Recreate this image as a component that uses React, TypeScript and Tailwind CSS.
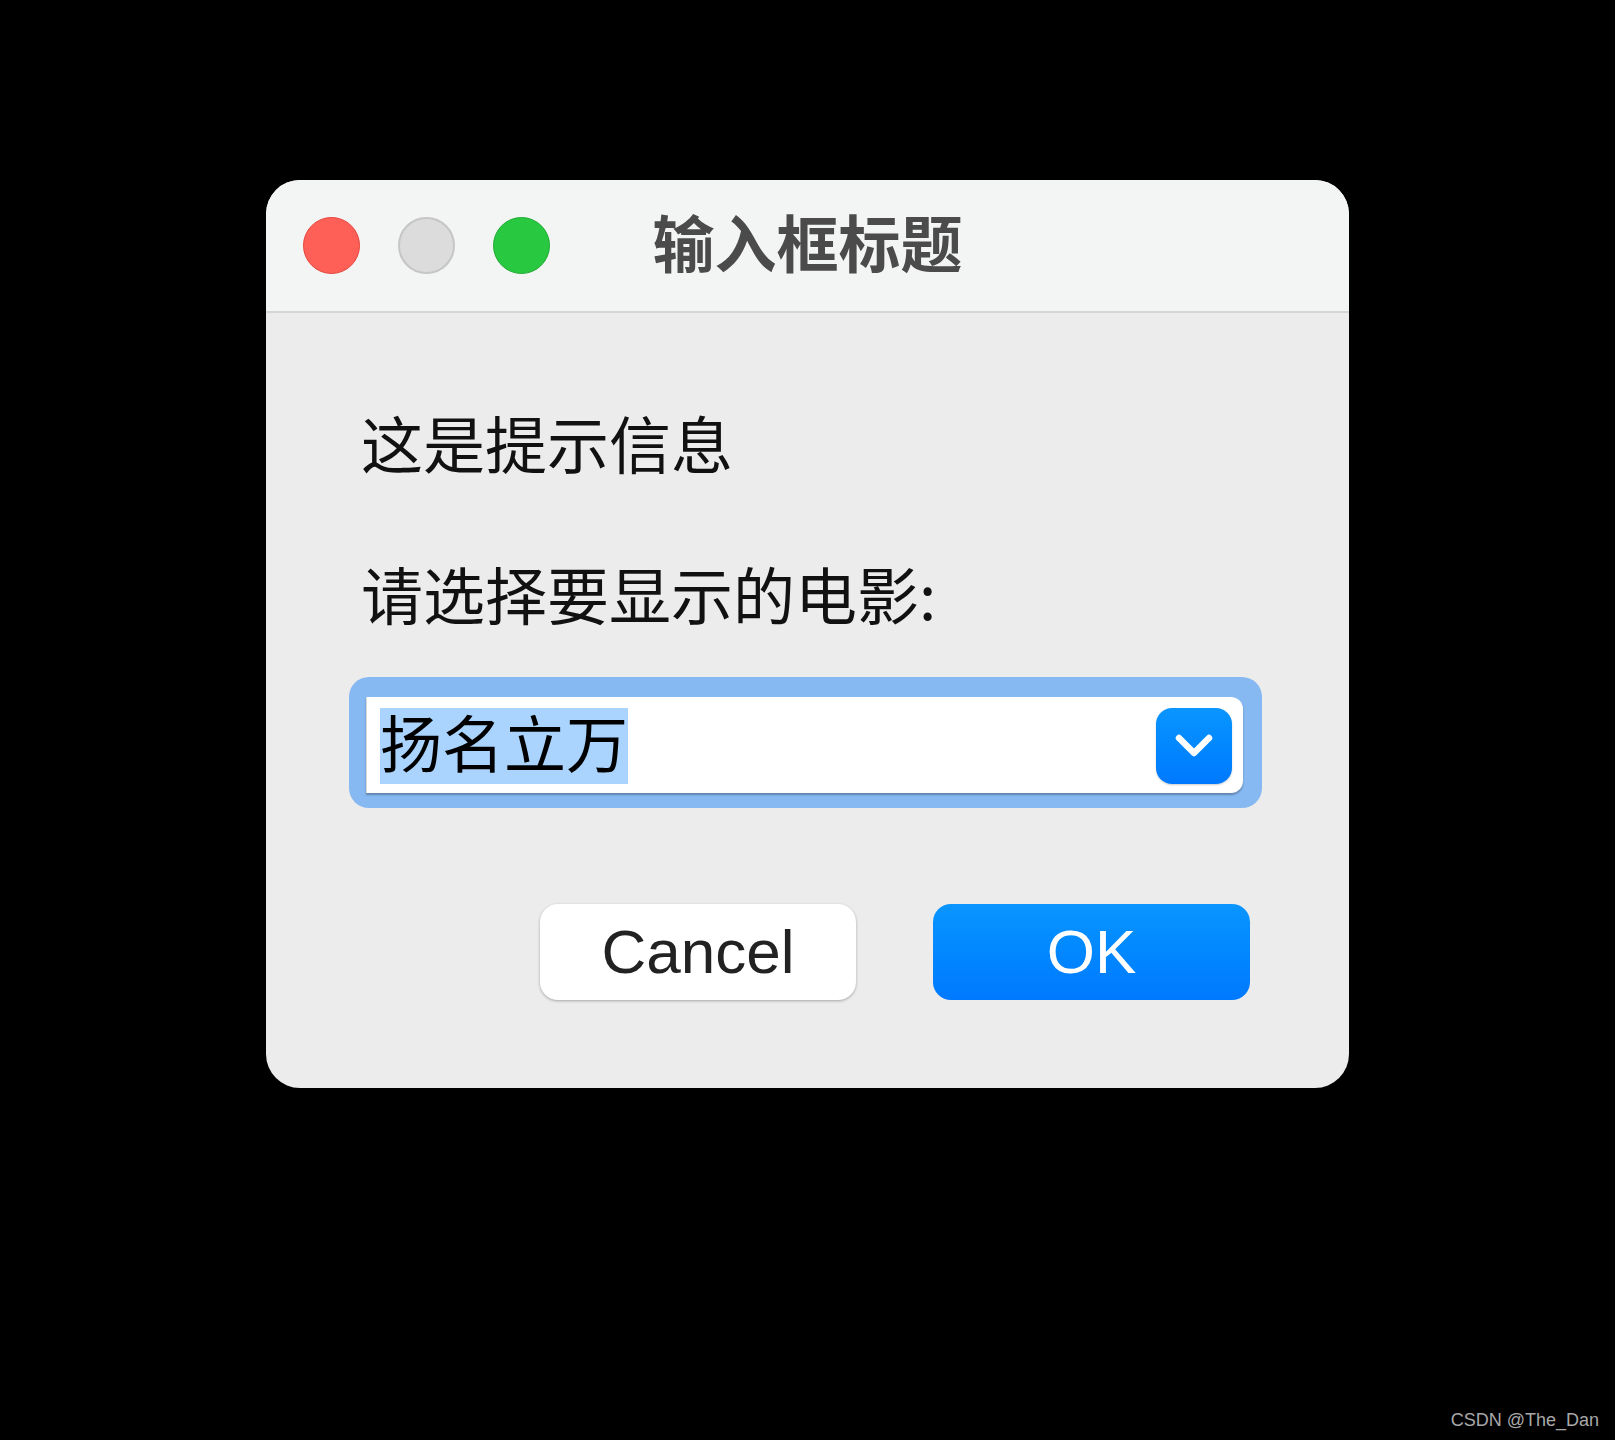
import React from "react";

const cjk = "font-['Noto_Sans_CJK_SC','Noto_Sans',sans-serif]";

export default function App() {
  return (
    <div className="relative h-[1440px] w-full bg-black pl-[266px] pt-[180px]">
      <div className="flex h-[908px] w-[1083px] flex-col overflow-hidden rounded-[34px] bg-[#ececec]">
        {/* title bar */}
        <div className="grid h-[133px] shrink-0 grid-cols-[1fr_auto_1fr] items-center border-b-2 border-[#d5d5d5] bg-[#f3f4f4] pl-[37px]">
          <div className="flex items-center gap-[38px]">
            <div className="h-[57px] w-[57px] rounded-full border border-[#e5443c] bg-[#fe5f57]" />
            <div className="h-[57px] w-[57px] rounded-full border-2 border-[#c6c6c6] bg-[#dcdcdc]" />
            <div className="h-[57px] w-[57px] rounded-full border border-[#1faa32] bg-[#28c840]" />
          </div>
          <div className={`${cjk} pb-[10px] pr-[37px] text-[62px] font-bold leading-[62px] text-[#4b4b4b]`}>输入框标题</div>
          <div />
        </div>

        {/* body */}
        <div className="flex flex-1 flex-col pl-[95px] pt-[98px]">
          <div className={`${cjk} text-[62px] leading-[62px] text-[#111]`}>这是提示信息</div>
          <div className={`${cjk} mt-[89px] text-[62px] leading-[62px] text-[#111]`}>请选择要显示的电影:</div>

          <div className="ml-[-12px] mt-[53px] w-[913px] rounded-[20px] bg-[#86b8f2] pb-[15px] pl-[17px] pr-[19px] pt-[20px]">
            <div className="flex h-[96px] items-center justify-between rounded-r-[12px] border-l border-[#d8d8d8] bg-white pl-[13px] pr-[11px] shadow-[0_2px_2px_rgba(0,0,0,0.28)]">
              <span className={`${cjk} mt-[1px] inline-block h-[76px] bg-[#aad4fd] text-[62px] leading-[66px] text-black`}>扬名立万</span>
              <div className="mt-[2px] flex h-[76px] w-[76px] items-center justify-center rounded-[16px] bg-gradient-to-b from-[#0b95ff] to-[#0079ff] shadow-[0_1px_2px_rgba(0,0,0,0.2)]">
                <svg width="40" height="28" viewBox="0 0 40 28">
                  <polyline points="5,6 20,21 35,6" fill="none" stroke="white" strokeWidth="6.5" strokeLinecap="round" strokeLinejoin="round" />
                </svg>
              </div>
            </div>
          </div>

          <div className="mr-[99px] mt-[96px] flex justify-end gap-[77px] self-stretch">
            <div className="flex h-[96px] w-[316px] items-center justify-center rounded-[18px] bg-white shadow-[0_1px_3px_rgba(0,0,0,0.3)]">
              <span className="font-['Liberation_Sans',Arial,sans-serif] text-[62px] leading-none text-[#222]">Cancel</span>
            </div>
            <div className="flex h-[96px] w-[317px] items-center justify-center rounded-[18px] bg-gradient-to-b from-[#0a95ff] to-[#0079ff]">
              <span className="font-['Liberation_Sans',Arial,sans-serif] text-[62px] leading-none text-white">OK</span>
            </div>
          </div>
        </div>
      </div>

      <div className="absolute bottom-[9px] right-[16px] font-['Liberation_Sans',Arial,sans-serif] text-[18px] leading-[22px] text-[#a8a8a8]">
        CSDN @The_Dan
      </div>
    </div>
  );
}
